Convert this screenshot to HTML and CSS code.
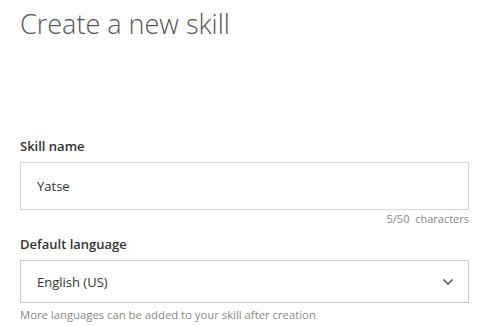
FILE: index.html
```html
<!DOCTYPE html>
<html lang="en">

<head>
    <meta charset="UTF-8">
    <title>Create a new skill</title>
    <link rel="stylesheet" href="styles.css">
</head>

<body>
    <div class="page">
        <h1 class="title">Create a new skill</h1>

        <div class="field skill-field">
            <label class="field-label" for="skill-name">Skill name</label>
            <div class="text-box" id="skill-name">Yatse</div>
            <div class="counter">5/50&nbsp; characters</div>
        </div>

        <div class="field">
            <label class="field-label">Default language</label>
            <div class="select-box">
                <span>English (US)</span>
                <svg class="chevron" width="12" height="8" viewBox="0 0 12 8">
                    <path d="M1.5 1.5 L6 6 L10.5 1.5" fill="none" stroke="#444" stroke-width="1.4" />
                </svg>
            </div>
            <div class="hint">More languages can be added to your skill after creation</div>
        </div>
    </div>
</body>

</html>
```

FILE: styles.css
```css
body {
    margin: 0;
    background: #fff;
    font-family: "Open Sans", Arial, sans-serif;
    color: #333;
}

.page {
    padding: 5px 15px 0 20px;
}

.title {
    margin: 0;
    font-size: 27px;
    font-weight: 300;
    color: #555;
    line-height: 38px;
}

.field {
    display: flex;
    flex-direction: column;
}

.skill-field {
    margin-top: 94px;
}

.field-label {
    font-size: 13px;
    font-weight: 600;
    color: #333;
    line-height: 18px;
    margin-bottom: 7px;
}

.text-box {
    height: 46px;
    border: 1px solid #d5d5d5;
    padding: 0 16px;
    display: flex;
    align-items: center;
    font-size: 13px;
    color: #333;
}

.counter {
    text-align: right;
    font-size: 11px;
    color: #888;
    line-height: 18px;
    margin-bottom: 7px;
}

.select-box {
    height: 41px;
    border: 1px solid #c8c8c8;
    padding: 0 14px 0 16px;
    display: flex;
    align-items: center;
    justify-content: space-between;
    font-size: 13px;
    color: #333;
}

.hint {
    font-size: 11.3px;
    color: #888;
    line-height: 18px;
    margin-top: 3px;
}
```
